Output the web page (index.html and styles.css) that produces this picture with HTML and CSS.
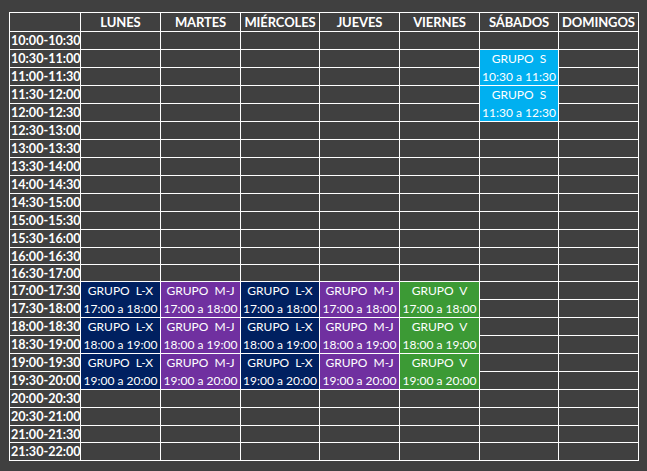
FILE: index.html
```html
<!DOCTYPE html>
<html lang="es">
<head>
<meta charset="utf-8">
<title>Horario</title>
<link rel="stylesheet" href="styles.css">
</head>
<body>
<div class="page">
  <div class="schedule">
    <div class="head corner"></div>
    <div class="head">LUNES</div>
    <div class="head">MARTES</div>
    <div class="head">MIÉRCOLES</div>
    <div class="head">JUEVES</div>
    <div class="head">VIERNES</div>
    <div class="head">SÁBADOS</div>
    <div class="head">DOMINGOS</div>

    <div class="time">10:00-10:30</div><div class="c"></div><div class="c"></div><div class="c"></div><div class="c"></div><div class="c"></div><div class="c"></div><div class="c"></div>

    <div class="time">10:30-11:00</div><div class="c"></div><div class="c"></div><div class="c"></div><div class="c"></div><div class="c"></div>
    <div class="ev sab"><span>GRUPO  S</span><span>10:30 a 11:30</span></div><div class="c"></div>
    <div class="time">11:00-11:30</div><div class="c"></div><div class="c"></div><div class="c"></div><div class="c"></div><div class="c"></div><div class="c"></div>

    <div class="time">11:30-12:00</div><div class="c"></div><div class="c"></div><div class="c"></div><div class="c"></div><div class="c"></div>
    <div class="ev sab"><span>GRUPO  S</span><span>11:30 a 12:30</span></div><div class="c"></div>
    <div class="time">12:00-12:30</div><div class="c"></div><div class="c"></div><div class="c"></div><div class="c"></div><div class="c"></div><div class="c"></div>

    <div class="time">12:30-13:00</div><div class="c"></div><div class="c"></div><div class="c"></div><div class="c"></div><div class="c"></div><div class="c"></div><div class="c"></div>
    <div class="time">13:00-13:30</div><div class="c"></div><div class="c"></div><div class="c"></div><div class="c"></div><div class="c"></div><div class="c"></div><div class="c"></div>
    <div class="time">13:30-14:00</div><div class="c"></div><div class="c"></div><div class="c"></div><div class="c"></div><div class="c"></div><div class="c"></div><div class="c"></div>
    <div class="time">14:00-14:30</div><div class="c"></div><div class="c"></div><div class="c"></div><div class="c"></div><div class="c"></div><div class="c"></div><div class="c"></div>
    <div class="time">14:30-15:00</div><div class="c"></div><div class="c"></div><div class="c"></div><div class="c"></div><div class="c"></div><div class="c"></div><div class="c"></div>
    <div class="time">15:00-15:30</div><div class="c"></div><div class="c"></div><div class="c"></div><div class="c"></div><div class="c"></div><div class="c"></div><div class="c"></div>
    <div class="time">15:30-16:00</div><div class="c"></div><div class="c"></div><div class="c"></div><div class="c"></div><div class="c"></div><div class="c"></div><div class="c"></div>
    <div class="time">16:00-16:30</div><div class="c"></div><div class="c"></div><div class="c"></div><div class="c"></div><div class="c"></div><div class="c"></div><div class="c"></div>
    <div class="time">16:30-17:00</div><div class="c"></div><div class="c"></div><div class="c"></div><div class="c"></div><div class="c"></div><div class="c"></div><div class="c"></div>

    <div class="time">17:00-17:30</div>
    <div class="ev lx"><span>GRUPO  L-X</span><span>17:00 a 18:00</span></div>
    <div class="ev mj"><span>GRUPO  M-J</span><span>17:00 a 18:00</span></div>
    <div class="ev lx"><span>GRUPO  L-X</span><span>17:00 a 18:00</span></div>
    <div class="ev mj"><span>GRUPO  M-J</span><span>17:00 a 18:00</span></div>
    <div class="ev v"><span>GRUPO  V</span><span>17:00 a 18:00</span></div>
    <div class="c"></div><div class="c"></div>
    <div class="time">17:30-18:00</div><div class="c"></div><div class="c"></div>

    <div class="time">18:00-18:30</div>
    <div class="ev lx"><span>GRUPO  L-X</span><span>18:00 a 19:00</span></div>
    <div class="ev mj"><span>GRUPO  M-J</span><span>18:00 a 19:00</span></div>
    <div class="ev lx"><span>GRUPO  L-X</span><span>18:00 a 19:00</span></div>
    <div class="ev mj"><span>GRUPO  M-J</span><span>18:00 a 19:00</span></div>
    <div class="ev v"><span>GRUPO  V</span><span>18:00 a 19:00</span></div>
    <div class="c"></div><div class="c"></div>
    <div class="time">18:30-19:00</div><div class="c"></div><div class="c"></div>

    <div class="time">19:00-19:30</div>
    <div class="ev lx"><span>GRUPO  L-X</span><span>19:00 a 20:00</span></div>
    <div class="ev mj"><span>GRUPO  M-J</span><span>19:00 a 20:00</span></div>
    <div class="ev lx"><span>GRUPO  L-X</span><span>19:00 a 20:00</span></div>
    <div class="ev mj"><span>GRUPO  M-J</span><span>19:00 a 20:00</span></div>
    <div class="ev v"><span>GRUPO  V</span><span>19:00 a 20:00</span></div>
    <div class="c"></div><div class="c"></div>
    <div class="time">19:30-20:00</div><div class="c"></div><div class="c"></div>

    <div class="time">20:00-20:30</div><div class="c"></div><div class="c"></div><div class="c"></div><div class="c"></div><div class="c"></div><div class="c"></div><div class="c"></div>
    <div class="time">20:30-21:00</div><div class="c"></div><div class="c"></div><div class="c"></div><div class="c"></div><div class="c"></div><div class="c"></div><div class="c"></div>
    <div class="time">21:00-21:30</div><div class="c"></div><div class="c"></div><div class="c"></div><div class="c"></div><div class="c"></div><div class="c"></div><div class="c"></div>
    <div class="time">21:30-22:00</div><div class="c"></div><div class="c"></div><div class="c"></div><div class="c"></div><div class="c"></div><div class="c"></div><div class="c"></div>
  </div>
</div>
</body>
</html>
```
FILE: styles.css
```css
html, body {
  margin: 0;
  padding: 0;
  background: #404040;
  height: 100%;
}

.page {
  padding: 12px 0 0 9px;
  font-family: Lato, "Open Sans", sans-serif;
  color: #ffffff;
}

.schedule {
  display: inline-grid;
  background: #ffffff;
  padding: 1px;
  gap: 1px;
  grid-template-columns: 70px 79px 79px 78px 79px 79px 78px 79px;
  grid-template-rows:
    18px
    17px 17px 17px 17px 17px 17px 17px 17px 17px 17px 17px 17px 16px 16px
    17px 17px 17px 17px 17px 17px
    17px 17px 16px 17px;
}

.schedule > div {
  background: #404040;
}

.head {
  display: flex;
  align-items: center;
  justify-content: center;
  font-weight: 700;
  font-size: 13px;
  letter-spacing: -0.1px;
  white-space: nowrap;
}

.time {
  display: flex;
  align-items: center;
  padding-left: 1px;
  font-weight: 700;
  font-size: 12.6px;
  white-space: nowrap;
  overflow: visible;
}

.ev {
  grid-row: span 2;
  display: grid;
  grid-template-rows: 1fr 1fr;
  font-size: 12px;
  white-space: pre;
  text-align: center;
}

.ev span {
  display: flex;
  align-items: center;
  justify-content: center;
}

.schedule > .lx { background: #002060; }
.schedule > .mj { background: #7030a0; }
.schedule > .v { background: #3c9a35; }
.schedule > .sab { background: #00b0f0; }
```
